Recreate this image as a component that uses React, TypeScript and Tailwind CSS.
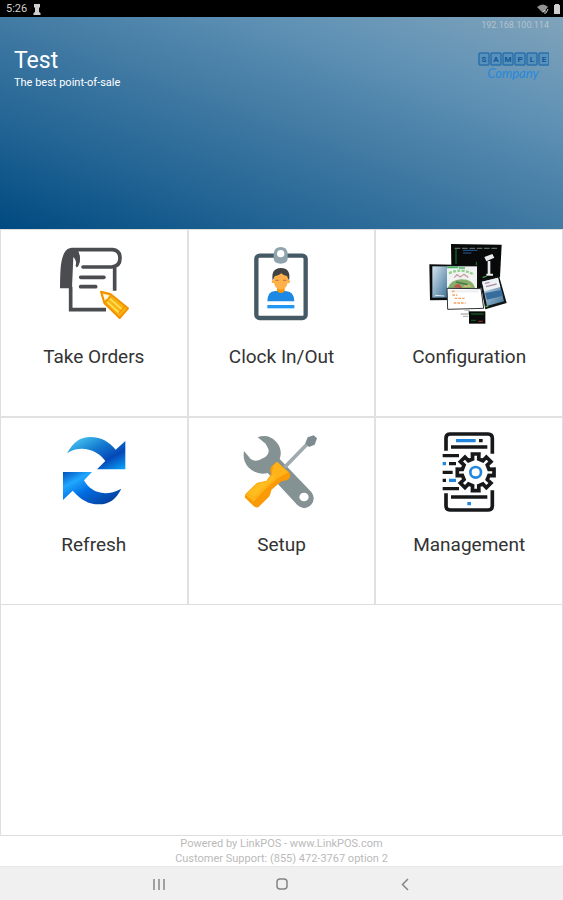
import React from "react";

const OrdersIcon = () => (
  <svg viewBox="-3 0 330 300" className="w-[110px] h-[100px]" aria-hidden="true" fill="none">
    <path d="M60 160 C61 115 60 75 74 52 Q81 39 96 39 H112 L118 58 Q124 85 108 98 Q111 76 100 66 L96 160Z" fill="#4b4c50" />
    <path d="M95 44 H218 Q240 46 240 70 Q240 95 214 96 H129" stroke="#4b4c50" strokeWidth="11" strokeLinecap="round" />
    <path d="M107 49 Q123 67 110 94" stroke="#4b4c50" strokeWidth="8" />
    <path d="M92 155 V224 H198 M224 98 V167" stroke="#4b4c50" strokeWidth="11" />
    <path d="M122 127 H192 M122 155 H167" stroke="#4b4c50" strokeWidth="11" strokeLinecap="round" />
    <path d="M183 170 L211 177 L264 220 L239 249 L193 204Z" fill="#f9b414" stroke="#f39200" strokeWidth="6" strokeLinejoin="round" />
    <path d="M189 176 L208 181 L203 190 L194 196Z" fill="#fff6df" />
    <path d="M209 191 L246 223 M202 201 L239 235" stroke="#ffe25a" strokeWidth="5" />
    <path d="M213 183 L194 204 M254 214 L236 236" stroke="#f39200" strokeWidth="4" />
  </svg>
);

const ClockIcon = () => (
  <svg viewBox="-9 0 330 300" className="w-[110px] h-[100px]" aria-hidden="true">
    <rect x="82" y="62" width="148" height="187" rx="10" fill="#fff" stroke="#455a64" strokeWidth="13" />
    <path d="M155 36 Q174 36 176 55 V72 Q174 86 155 86 Q136 86 134 72 V55 Q137 36 155 36Z" fill="#90a4ae" />
    <circle cx="155" cy="56" r="11" fill="#fff" />
    <path d="M115 199 Q116 166 141 168 H169 Q195 168 196 199Z" fill="#1e88e5" />
    <path d="M144 150 H167 V168 Q156 180 144 168Z" fill="#ff9800" />
    <path d="M134 125 Q132 107 155 107 Q179 107 178 125 L176 144 Q172 162 155 164 Q139 162 135 144Z" fill="#ffb04a" />
    <path d="M131 137 Q125 100 155 99 Q187 99 180 137 L174 123 Q162 121 157 115 Q148 123 137 124Z" fill="#424242" />
    <path d="M139 136 H149 M162 136 H172" stroke="#b9783c" strokeWidth="3" />
    <circle cx="132" cy="140" r="4" fill="#ffa726" />
    <circle cx="179" cy="140" r="4" fill="#ffa726" />
    <rect x="115" y="210" width="81" height="10" fill="#2196f3" />
  </svg>
);

const DevicesIcon = () => (
  <svg viewBox="-3 0 330 300" className="w-[110px] h-[100px]" aria-hidden="true">
    <defs>
      <linearGradient id="tabletBlue" x1="0" y1="0" x2="1" y2="1">
        <stop offset="0" stopColor="#d5e5ef" />
        <stop offset="1" stopColor="#3f7399" />
      </linearGradient>
    </defs>
    {/* Terminal */}
    <path d="M108 27 L260 29 L255 125 L195 160 H110Z" fill="#080a0a" />
    <path d="M119 40 H247" stroke="#616b65" strokeWidth="4" strokeDasharray="17 5" />
    <path d="M123 42 V87 M184 80 V125" stroke="#167c30" strokeWidth="3" />
    <path d="M144 46 H187 M144 54 H169" stroke="#295d9a" strokeWidth="3" />
    <path d="M208 66 L232 57 L238 68 L214 79Z M218 78 H226 V117 H218Z M214 116 H234 V122 H214Z" fill="#e8ecec" />
    {/* Tablette */}
    <path d="M43 88 L194 91 L192 194 L45 196Z" fill="#0b0d0e" />
    <path d="M52 94 H96 V188 H52Z" fill="url(#tabletBlue)" />
    <path d="M96 94 H186 V160 H96Z" fill="#f1f3f2" />
    <path d="M96 97 H130 M132 99 H150" stroke="#44b662" strokeWidth="5" />
    <path d="M102 115 Q140 97 177 119" stroke="#8fd08c" strokeWidth="7" strokeDasharray="9 4" fill="none" />
    <path d="M118 128 L126 119 L136 126 L147 118 L160 127" stroke="#c9a0a6" strokeWidth="4" fill="none" />
    <path d="M98 160 Q106 134 139 133 Q174 133 181 160Z" fill="#86ae6d" />
    <path d="M116 157 Q121 146 133 147 L142 160Z" fill="#c0574a" />
    <path d="M144 157 Q153 140 171 155Z" fill="#d3bb74" />
    <path d="M123 141 L158 149" stroke="#4c7d49" strokeWidth="5" />
    <path d="M60 181 L88 183" stroke="#dfe8ee" strokeWidth="3" />
    {/* Petite tablette */}
    <path d="M194 135 L252 122 L275 204 L211 223Z" fill="#111315" />
    <path d="M201 140 L249 128 L267 199 L216 213Z" fill="url(#tabletBlue)" />
    <path d="M201 140 L249 128 L256 156 L208 169Z" fill="#eef3f6" />
    <path d="M210 145 L224 142 M213 155 L245 147" stroke="#b18fa7" strokeWidth="4" />
    <path d="M210 174 L259 165 L264 182 L216 194Z" fill="#376d9c" />
    <path d="M203 128 L215 123 M211 215 L220 213" stroke="#3ea64d" strokeWidth="4" />
    {/* Caisse */}
    <path d="M96 160 L198 161 L206 220 L98 223Z" fill="#fff" stroke="#303438" strokeWidth="3" />
    <path d="M104 169 H191" stroke="#eef0f1" strokeWidth="7" />
    <path d="M111 171 L121 166 M112 180 H127 M119 190 H152 M116 204 H152" stroke="#f3a263" strokeWidth="4" strokeDasharray="8 3" />
    <path d="M148 225 L162 225 L160 237 H137 M144 244 H160" stroke="#b7bbbb" strokeWidth="4" fill="none" />
    <path d="M162 229 H211 V266 H162Z" fill="#080b09" />
    <path d="M168 237 H206 M168 256 H183" stroke="#164f24" strokeWidth="4" />
    <path d="M190 259 H203" stroke="#872e2b" strokeWidth="4" />
  </svg>
);

const RefreshIcon = () => (
  <svg viewBox="-3 0 330 300" className="w-[110px] h-[100px]" aria-hidden="true">
    <defs>
      <linearGradient id="arrowTop" x1="0" y1="0" x2="1" y2="1">
        <stop offset="0" stopColor="#56d9fa" />
        <stop offset=".42" stopColor="#147bd0" />
        <stop offset=".7" stopColor="#0548b7" />
        <stop offset="1" stopColor="#09a8ff" />
      </linearGradient>
      <linearGradient id="arrowBottom" x1="0" y1="0" x2="1" y2="1">
        <stop offset="0" stopColor="#0050bc" />
        <stop offset=".24" stopColor="#20a8ff" />
        <stop offset=".5" stopColor="#006be0" />
        <stop offset="1" stopColor="#063489" />
      </linearGradient>
    </defs>
    <path d="M81 91 C101 56 121 42 151 42 C186 42 208 58 227 80 L256 54 V139 H171 L196 114 C174 82 123 63 81 91Z" fill="url(#arrowTop)" />
    <path d="M69 147 H156 L132 172 C148 204 191 226 244 197 C228 230 207 244 177 244 C145 244 121 229 98 203 L69 231Z" fill="url(#arrowBottom)" />
  </svg>
);

const SetupIcon = () => (
  <svg viewBox="-9 0 330 300" className="w-[110px] h-[100px]" aria-hidden="true">
    <path d="M86 43 Q118 31 142 57 Q162 80 152 108 L247 207 Q262 227 246 246 Q226 265 205 246 L116 150 Q82 158 57 132 Q40 112 45 84 L65 108 Q76 117 91 111 L110 101 Q122 92 118 78 L110 62Z" fill="#849294" />
    <ellipse cx="225" cy="222" rx="14" ry="13" fill="#fff" />
    <path d="M167 133 L237 61" stroke="#9faaaf" strokeWidth="11" />
    <path d="M229 61 L236 43 L254 37 L264 46 L257 65 L240 72Z" fill="#7c8b90" />
    <path d="M144 116 L182 150 Q186 156 181 166 Q174 174 157 175 L127 201 Q124 218 117 224 L88 253 Q80 255 73 248 L48 224 Q46 215 53 209 L84 180 L112 174 L126 154 Q121 135 129 128Z" fill="#f99a06" />
    <path d="M132 128 L144 116 L178 148 L157 160 Q142 168 134 176 L107 200 L74 236 L48 215 L84 180 L112 174 L128 154Z" fill="#ffb318" />
    <path d="M85 184 L114 176 L140 150 L134 168 L107 190 L76 221 L58 211Z" fill="#ffbd20" />
  </svg>
);

// 8 dents, chacune entre deux rayons autour du centre
const gearPoints = Array.from({ length: 8 }, (_, i) =>
  [
    [-13, 41],
    [-10, 56],
    [10, 56],
    [13, 41],
  ].map(([offset, radius]) => {
    const angle = ((i * 45 + offset) * Math.PI) / 180;
    return `${(182 + radius * Math.sin(angle)).toFixed(1)},${(148 - radius * Math.cos(angle)).toFixed(1)}`;
  }).join(" ")
).join(" ");

const ManagementIcon = () => (
  <svg viewBox="-3 0 330 300" className="w-[110px] h-[100px]" aria-hidden="true" fill="none" strokeWidth="10">
    <path d="M93 83 V45 Q93 33 106 33 H219 Q232 33 232 46 V92 M93 211 V248 Q93 261 106 261 H219 Q232 261 232 248 V202" stroke="#16181a" strokeWidth="11" />
    <path d="M108 72 H217 M108 222 H217 M83 98 H132 M102 122 H123 M83 148 H113 M83 172 H93 M83 197 H132 M192 53 H203" stroke="#16181a" />
    <path d="M123 53 H182 M83 122 H93 M102 172 H123 M157 242 H168" stroke="#2286df" />
    <polygon points={gearPoints} fill="#fff" stroke="#16181a" strokeWidth="11" />
    <circle cx="182" cy="148" r="16" stroke="#2286df" strokeWidth="8" />
  </svg>
);

const tiles = [
  { label: "Take Orders", icon: <OrdersIcon /> },
  { label: "Clock In/Out", icon: <ClockIcon /> },
  { label: "Configuration", icon: <DevicesIcon /> },
  { label: "Refresh", icon: <RefreshIcon /> },
  { label: "Setup", icon: <SetupIcon /> },
  { label: "Management", icon: <ManagementIcon /> },
];

const App = () => {
  return (
    <div className="min-h-screen flex flex-col bg-white font-['Roboto',sans-serif]">
      <div className="h-[17px] bg-black text-[#cfcfcf] px-1.5 flex items-center justify-between">
        <div className="flex items-center gap-1.5">
          <span className="text-[11px] leading-4">5:26</span>
          <svg viewBox="0 0 8 12" className="w-2 h-3" fill="currentColor" aria-hidden="true">
            <path d="M1 1 H7 V4 L6 5 V9 L7.5 10 V12 H.5 V10 L2 9 V5 L1 4Z" />
          </svg>
        </div>
        <div className="flex items-center gap-1 -mr-1">
          <svg viewBox="0 0 12 10" className="w-3 h-2.5" aria-hidden="true">
            <path d="M0 3 Q6 -2 11 3 L6 9Z" fill="#929292" />
            <path d="M6 8 L8 6 V10 M9 9 L11 5" stroke="#d0d0d0" fill="none" />
          </svg>
          <svg viewBox="0 0 8 10" className="w-2 h-2.5" fill="currentColor" aria-hidden="true">
            <path d="M2 0 H6 V1 H7 V10 H1 V1 H2Z" />
          </svg>
        </div>
      </div>

      <header className="h-[212px] flex justify-between px-3.5 bg-[linear-gradient(200deg,#80a3bb_0%,#6092b5_25%,#417aa3_50%,#226494_75%,#004a80_100%)]">
        <div className="pt-7 text-white">
          <h1 className="text-[23px] leading-8">Test</h1>
          <p className="text-[11px] leading-3">The best point-of-sale</p>
        </div>
        <div className="flex flex-col items-end">
          <p className="text-[9px] leading-4 text-[#b4c3ce]">192.168.100.114</p>
          <svg viewBox="0 0 72 34" className="w-[72px] h-[34px] mt-[18px]" role="img" aria-label="Sample Company">
            {["S", "A", "M", "P", "L", "E"].map((letter, i) => (
              <g key={letter}>
                <rect x={2 + i * 12} y="2" width="10" height="12" rx="1" fill="#5790bb" stroke="#2a70aa" strokeWidth="1.500" />
                <text x={7 + i * 12} y="11" textAnchor="middle" fontSize="8" fontWeight="700" fill="#125797">
                  {letter}
                </text>
              </g>
            ))}
            <text x="36" y="27" textAnchor="middle" fontSize="13" fontStyle="italic" fill="#2688dc" fontFamily="Lato, cursive">
              Company
            </text>
          </svg>
        </div>
      </header>

      <main className="flex-1 flex flex-col border-x border-[#dedede]">
        <div className="grid grid-cols-3 gap-0.5 bg-[#e1e1e1] border-y border-[#dedede]">
          {tiles.map((tile) => (
            <button key={tile.label} type="button" className="h-[186px] bg-white flex flex-col items-center pt-[5px]">
              {tile.icon}
              <span className="mt-2 text-[19px] leading-7 text-[#333]">{tile.label}</span>
            </button>
          ))}
        </div>
      </main>

      <footer className="border-t border-[#dedede] text-center text-[11px] leading-[15px] text-[#bababa]">
        <p>
          Powered by LinkPOS - <a href="#">www.LinkPOS.com</a>
        </p>
        <p>Customer Support: (855) 472-3767 option 2</p>
      </footer>

      <nav className="h-[34px] bg-[#f0f0f0] border-t border-[#e6e6e6] flex items-center justify-center gap-[99px] text-[#858585]">
        <button type="button" aria-label="Recent apps">
          <svg viewBox="0 0 24 24" className="w-6 h-6" stroke="currentColor" fill="none" strokeWidth="1.500">
            <path d="M7 7 V18 M12 7 V18 M17 7 V18" />
          </svg>
        </button>
        <button type="button" aria-label="Home">
          <svg viewBox="0 0 24 24" className="w-6 h-6" stroke="currentColor" fill="none" strokeWidth="1.500">
            <rect x="7" y="7" width="10" height="10" rx="3" />
          </svg>
        </button>
        <button type="button" aria-label="Back">
          <svg viewBox="0 0 24 24" className="w-6 h-6" stroke="currentColor" fill="none" strokeWidth="1.500">
            <path d="M15 7 L9.500 12.500 L15 18" />
          </svg>
        </button>
      </nav>
    </div>
  );
};

export default App;
